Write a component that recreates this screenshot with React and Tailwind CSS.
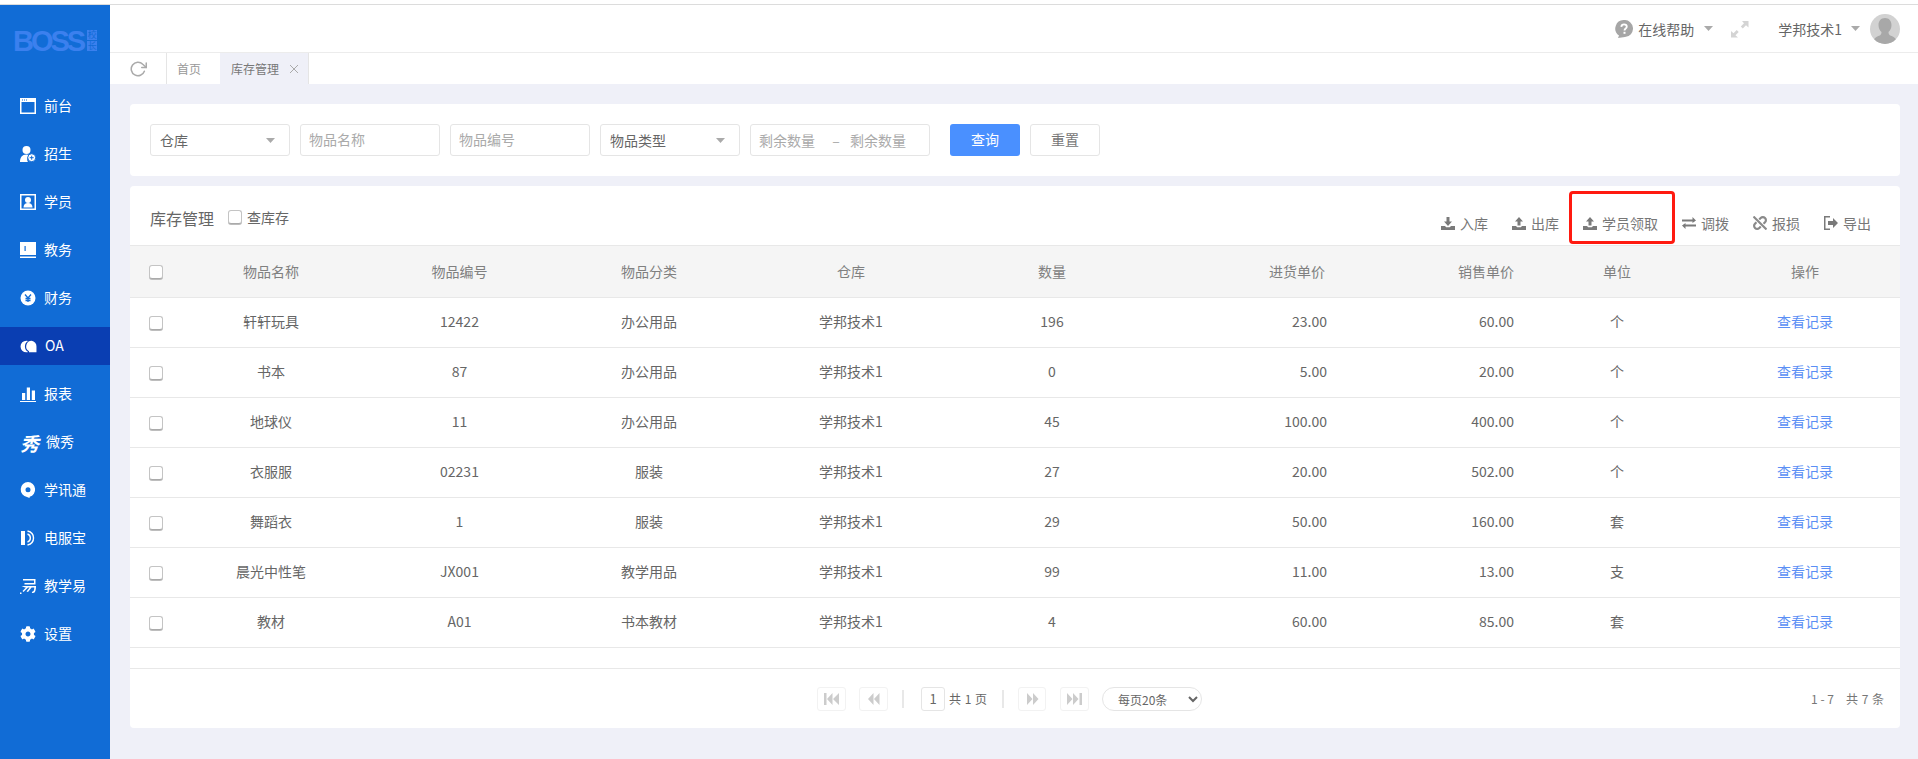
import { FaCog, FaUnlink } from 'react-icons/fa';
import { FiRotateCw } from 'react-icons/fi';

const rows = [
  ['轩轩玩具', '12422', '办公用品', '学邦技术1', '196', '23.00', '60.00', '个'],
  ['书本', '87', '办公用品', '学邦技术1', '0', '5.00', '20.00', '个'],
  ['地球仪', '11', '办公用品', '学邦技术1', '45', '100.00', '400.00', '个'],
  ['衣服服', '02231', '服装', '学邦技术1', '27', '20.00', '502.00', '个'],
  ['舞蹈衣', '1', '服装', '学邦技术1', '29', '50.00', '160.00', '套'],
  ['晨光中性笔', 'JX001', '教学用品', '学邦技术1', '99', '11.00', '13.00', '支'],
  ['教材', 'A01', '书本教材', '学邦技术1', '4', '60.00', '85.00', '套'],
];

const Svg = ({ children, size = 16 }) => (
  <svg width={size} height={size} viewBox="0 0 16 16" fill="white" className="shrink-0">{children}</svg>
);

const navItems = [
  { label: '前台', icon: <Svg><path fillRule="evenodd" d="M0 0h16v16H0zM1.500 4v10.500h13V4z" /><path d="M2 1.500h1v1H2zM4 1.500h1v1H4zM6 1.500h1v1H6z" fill="#116cd6" /></Svg> },
  { label: '招生', icon: <Svg><circle cx="6.500" cy="4" r="4" /><path d="M0 16c0-4.500 2-7.500 6.500-7.500 1 0 2 .2 2.600.5-2 1.500-2.600 4.800-1.200 7z" /><circle cx="11.700" cy="11.700" r="4" fill="white" stroke="#116cd6" strokeWidth="1" /><path d="M9.700 11.700h4M11.700 9.700v4" stroke="#116cd6" strokeWidth="1" /></Svg> },
  { label: '学员', icon: <Svg><path fillRule="evenodd" d="M0 0h16v16H0zM1.500 1.500v13h13v-13z" /><circle cx="8" cy="6" r="3" /><path d="M3.500 13.500c0-3.200 2-4.500 4.500-4.500s4.500 1.300 4.500 4.500z" /></Svg> },
  { label: '教务', icon: <Svg><path d="M0 0h16v13H0zM0 14.500h16V16H0z" /><path d="M4.500 4h1.200v5H4.500z" fill="#116cd6" /></Svg> },
  { label: '财务', icon: <Svg><circle cx="8" cy="8" r="7.500" /><path d="M5 4.500 8 8l3-3.500M8 8v4M5.500 8.500h5M5.500 10.500h5" stroke="#116cd6" strokeWidth="1.300" fill="none" /></Svg> },
  { label: 'OA', active: true, icon: <Svg size={17}><path fillRule="evenodd" d="M6 2.500a5.500 5.500 0 1 0 0 11c.6 0 1.200-.1 1.700-.3A6 6 0 0 1 7.600 2.800 5.500 5.500 0 0 0 6 2.500z" /><path d="M11 2.500a5.300 5.300 0 0 0-2.500 9.900V13.500h7V8A5.300 5.300 0 0 0 11 2.500z" /></Svg> },
  { label: '报表', icon: <Svg><path d="M2 7h3.200v7H2zM6.800 1.500H10V14H6.800zM11.800 4.500H15V14h-3.200zM0 15h16v1H0z" /></Svg> },
  { label: '微秀', glyph: true },
  { label: '学讯通', icon: <Svg><path fillRule="evenodd" d="M8 0a7.500 7.500 0 0 0-1 14.900L9.500 16l.2-1.300A7.500 7.500 0 0 0 8 0zm0 5.300a2.500 2.500 0 1 1 0 5 2.500 2.500 0 0 1 0-5z" /></Svg> },
  { label: '电服宝', icon: <Svg><path d="M1 1h4v14H1z" /><path d="M5 5c1.500.5 1.500 5.500 0 6z" fill="#116cd6" /><path d="M7.500 1c8 1.800 8 12.200 0 14M7.500 4c3.800 1 3.800 7 0 8" fill="none" stroke="white" strokeWidth="1.400" /></Svg> },
  { label: '教学易', icon: <Svg><path d="M3 1h12.500v5.500H4.500V5h9.500V2.500H3zM1.500 8H16c0 3.500-.5 7-3 7h-1.200l.6-1.500c1.200.2 1.800-1.200 1.900-4H5zM0 14.500h1.500V16H0zM2.500 13l4-4h2l-5 5zM6.500 13.500l3.500-4.500h2l-4 5z" /></Svg> },
  { label: '设置', icon: <FaCog className="w-4 h-4 text-white shrink-0" /> },
];

const Tray = ({ up }) => (
  <svg width="14" height="14" viewBox="0 0 14 14" fill="#7a7a7a" className="shrink-0">
    {up ? <path d="M7 1 11 5.500H8.500V9.500h-3V5.500H3z" /> : <path d="M5.500 1h3v4.500H11L7 10 3 5.500h2.500z" />}
    <path d="M0 10h4l1.200 1.300h3.600L10 10h4v4H0z" />
  </svg>
);

const actions = [
  { label: '入库', icon: <Tray /> },
  { label: '出库', icon: <Tray up /> },
  { label: '学员领取', icon: <Tray up />, marked: true },
  { label: '调拨', icon: <svg width="14" height="14" viewBox="0 0 14 14" fill="#7a7a7a" className="shrink-0"><path d="M0 3.500h10.500V1L14 4.500 10.500 7V5.500H0zM14 8.500H3.500V7L0 9.500 3.500 13v-2.500H14z" /></svg> },
  { label: '报损', icon: <FaUnlink className="w-[14px] h-[14px] text-[#8a8a8a] shrink-0" /> },
  { label: '导出', icon: <svg width="14" height="14" viewBox="0 0 14 14" fill="#7a7a7a" className="shrink-0"><path d="M0 0h6v1.500H1.500v11H6V14H0z" /><path d="M4 5h5V2l5 5-5 5V9H4z" /></svg> },
];

const Caret = () => (
  <svg width="9" height="5" viewBox="0 0 9 5" fill="#aaaaaa" className="shrink-0"><path d="M0 0h9L4.500 5z" /></svg>
);

const Check = () => (
  <input type="checkbox" className="appearance-none block w-[14px] h-[14px] rounded-[3px] border border-[#c4c4c4] border-b-[#aaa] bg-white shadow-[0_1px_0_#bdbdbd]" />
);

const FakeSelect = ({ label }) => (
  <div className="w-[140px] h-8 flex items-center justify-between pl-[9px] pr-[14px] border border-[#e5e5e5] rounded-[3px] text-[#666] text-sm">
    <span>{label}</span>
    <Caret />
  </div>
);

const PageBtn = ({ children, w = 'w-[28px]' }) => (
  <button className={`h-6 ${w} flex items-center justify-center border border-[#f2f2f2] rounded-[3px]`}>
    <svg width="15" height="12" viewBox="0 0 15 12" fill="#cccccc">{children}</svg>
  </button>
);

export default function App() {
  return (
    <div className="h-screen overflow-hidden flex flex-col bg-[#eff0f8] text-[#666] font-['Noto_Sans_CJK_SC','Noto_Sans',sans-serif]">
      <div className="h-[5px] shrink-0 bg-white border-b border-[#dcdcdc]" />
      <div className="flex flex-1 min-h-0">
        <aside className="w-[110px] shrink-0 bg-[#116cd6] text-white">
          <div className="h-[77px] flex items-start pl-[13px] pt-[25px] text-[#3b80ee]">
            <span className="font-['Liberation_Sans',sans-serif] font-bold text-[29px] leading-[22px] tracking-[-3px]">BOSS</span>
            <div className="ml-1 flex flex-col gap-px">
              <span className="w-[10px] h-[10px] bg-[#3b80ee] text-[#116cd6] text-[9px] leading-[10px] text-center">校</span>
              <span className="w-[10px] h-[10px] bg-[#3b80ee] text-[#116cd6] text-[9px] leading-[10px] text-center">长</span>
            </div>
          </div>
          <nav className="pt-[5px]">
            {navItems.map(item => (
              <div key={item.label} className={`h-[38px] mb-[10px] flex items-center pl-5 gap-2 text-sm ${item.active ? 'bg-[#0a3eb2]' : ''}`}>
                {item.glyph
                  ? <span className="w-[17px] text-[19px] italic font-bold leading-none text-white">秀</span>
                  : item.icon}
                <span className={`pb-[2px] ${item.glyph ? 'ml-px' : ''}`}>{item.label}</span>
              </div>
            ))}
          </nav>
        </aside>

        <main className="flex-1 min-w-0 flex flex-col">
          <header className="h-12 shrink-0 bg-white border-b border-[#ececec] flex items-center justify-end pr-[18px] text-sm">
            <svg width="18" height="18" viewBox="0 0 18 18" className="shrink-0">
              <path d="M9 0a8.500 8.500 0 0 1 1 17l-7 1 1-2.500A8.500 8.500 0 0 1 9 0z" fill="#a6a6a6" />
              <path d="M6.300 6.800C6.500 5 7.700 4.300 9 4.300c1.600 0 2.800 1 2.800 2.400 0 1.800-2.300 1.900-2.300 3.700" fill="none" stroke="white" strokeWidth="1.800" />
              <rect x="8.500" y="11.800" width="2" height="2" fill="white" />
            </svg>
            <span className="ml-[5px]">在线帮助</span>
            <span className="ml-[10px]"><Caret /></span>
            <svg width="18" height="18" viewBox="0 0 18 18" fill="#d4d4d4" className="ml-[18px]">
              <path d="M11 1h6.500v6.500L15 5.200 11.800 8.500 9.800 6.500 13 3.200zM0 17.500V11l2.500 2.300 3.200-3.300 2 2-3.200 3.300L7 17.500z" />
            </svg>
            <span className="ml-[29px]">学邦技术1</span>
            <span className="ml-[9px]"><Caret /></span>
            <div className="ml-[10px] w-[30px] h-[30px] rounded-full bg-[#d2d2d2] overflow-hidden">
              <svg width="30" height="30" viewBox="0 0 30 30" fill="#a8a8a8">
                <path d="M15 4c4 0 6.500 2.800 6.500 7 0 3-1.200 5.500-3 7 0 2 .5 3 2.500 3.800 2.500 1 4.500 2 5 4.200H4c.5-2.200 2.500-3.200 5-4.200 2-.8 2.500-1.800 2.500-3.800-1.800-1.500-3-4-3-7 0-4.200 2.500-7 6.500-7zM3 26h24v4H3z" />
              </svg>
            </div>
          </header>

          <div className="h-[31px] shrink-0 bg-white flex text-xs">
            <div className="w-[57px] flex items-center justify-center border-r border-[#e5e5e5] text-[#aaa]">
              <FiRotateCw className="w-[18px] h-[18px]" />
            </div>
            <div className="w-[53px] flex items-center pl-[10px] text-[#999]">首页</div>
            <div className="w-[89px] flex items-center pl-[11px] gap-[11px] bg-[#eff0f8] border-r border-[#e5e5e5] text-[#777]">
              <span>库存管理</span>
              <svg width="8" height="8" viewBox="0 0 8 8" stroke="#aaaaaa" strokeWidth="1" className="shrink-0"><path d="M0 0l8 8M8 0 0 8" /></svg>
            </div>
          </div>

          <div className="flex-1 min-h-0 pt-5 pl-5 pr-[18px]">
            <section className="h-[72px] bg-white rounded flex items-center gap-[10px] px-5">
              <FakeSelect label="仓库" />
              <input placeholder="物品名称" className="w-[140px] h-8 px-[8px] pb-[2px] border border-[#e5e5e5] rounded-[3px] text-sm placeholder:text-[#aaa]" />
              <input placeholder="物品编号" className="w-[140px] h-8 px-[8px] pb-[2px] border border-[#e5e5e5] rounded-[3px] text-sm placeholder:text-[#aaa]" />
              <FakeSelect label="物品类型" />
              <div className="w-[180px] h-8 shrink-0 flex items-center pl-2 border border-[#e5e5e5] rounded-[3px] text-sm text-[#aaa] whitespace-nowrap">
                <span className="w-[56px]">剩余数量</span>
                <span className="w-[35px] pl-[7px] text-center">–</span>
                <span className="w-[56px]">剩余数量</span>
              </div>
              <button className="ml-[10px] w-[70px] h-8 pb-[2px] bg-[#4a90ff] rounded-[3px] text-white text-sm">查询</button>
              <button className="w-[70px] h-8 pb-[2px] border border-[#e5e5e5] rounded-[3px] text-sm text-[#777]">重置</button>
            </section>

            <section className="mt-[10px] h-[542px] bg-white rounded overflow-hidden">
              <div className="h-[59px] flex pl-5 pr-[29px]">
                <span className="mt-[20px] text-base leading-6 text-[#666]">库存管理</span>
                <label className="mt-[24px] ml-[14px] h-[14px] flex items-center gap-[5px] text-sm">
                  <Check />
                  <span>查库存</span>
                </label>
                <div className="ml-auto mt-[27px] h-5 flex items-center gap-6 text-sm text-[#777]">
                  {actions.map(a => (
                    <div key={a.label} className="relative flex items-center gap-[5px]">
                      {a.icon}
                      <span>{a.label}</span>
                      {a.marked && <div className="absolute -left-[14px] -right-[17px] -top-[22px] -bottom-[11px] border-[3px] border-[#ff1a10] rounded-[4px]" />}
                    </div>
                  ))}
                </div>
              </div>

              <table className="table-fixed w-full text-sm border-collapse">
                <colgroup>
                  <col className="w-[46px]" />
                  <col className="w-[190px]" />
                  <col className="w-[187px]" />
                  <col className="w-[192px]" />
                  <col className="w-[212px]" />
                  <col className="w-[190px]" />
                  <col className="w-[190px]" />
                  <col className="w-[187px]" />
                  <col className="w-[186px]" />
                  <col className="w-[190px]" />
                </colgroup>
                <thead>
                  <tr className="h-[52px] bg-[#f5f5f5] border-y border-[#e8e8e8] text-[#808080]">
                    <th className="font-normal pl-[19px]"><Check /></th>
                    {['物品名称', '物品编号', '物品分类', '仓库', '数量'].map(h => <th key={h} className="font-normal text-center pb-[2px]">{h}</th>)}
                    <th className="font-normal text-right pr-3 pb-[2px]">进货单价</th>
                    <th className="font-normal text-right pr-[10px] pb-[2px]">销售单价</th>
                    <th className="font-normal text-center pb-[2px]">单位</th>
                    <th className="font-normal text-center pb-[2px]">操作</th>
                  </tr>
                </thead>
                <tbody>
                  {rows.map(r => (
                    <tr key={r[0]} className="h-[50px] border-b border-[#e8e8e8]">
                      <td className="pl-[19px]"><Check /></td>
                      {r.slice(0, 5).map((v, i) => <td key={i} className="text-center pb-1">{v}</td>)}
                      <td className="text-right pr-[10px] pb-1">{r[5]}</td>
                      <td className="text-right pr-[10px] pb-1">{r[6]}</td>
                      <td className="text-center pb-1">{r[7]}</td>
                      <td className="text-center text-[#5b8ff5] pb-1">查看记录</td>
                    </tr>
                  ))}
                  <tr className="h-[21px] border-b border-[#e8e8e8]"><td colSpan={10} /></tr>
                </tbody>
              </table>

              <div className="h-[60px] flex items-center pl-[687px] pr-4 text-xs">
                <PageBtn w="w-[29px]"><path d="M0 0h2.500v12H0zM8.500 0v12L3 6zM15 0v12L9 6z" /></PageBtn>
                <div className="ml-[13px]"><PageBtn w="w-[29px]"><path d="M7.500 0v12L2 6zM13.500 0v12L8 6z" /></PageBtn></div>
                <span className="ml-[14px] w-[2px] h-[18px] bg-[#e8e8e8]" />
                <span className="ml-[17px] w-6 h-6 border border-[#e5e5e5] rounded-[3px] flex items-center justify-center text-[13px]">1</span>
                <span className="ml-[4px] w-[37px] whitespace-nowrap [word-spacing:1px]">共 1 页</span>
                <span className="ml-[16px] w-[2px] h-[18px] bg-[#e8e8e8]" />
                <div className="ml-[14px]"><PageBtn><path d="M2 0v12l5.500-6zM8 0v12l5.500-6z" /></PageBtn></div>
                <div className="ml-[14px]"><PageBtn w="w-[29px]"><path d="M0 0v12l5.500-6zM6 0v12l5.500-6zM12.500 0H15v12h-2.500z" /></PageBtn></div>
                <select className="ml-[13px] w-[100px] h-6 pl-[11px] border border-[#e5e5e5] rounded-full text-xs bg-white">
                  <option>每页20条</option>
                </select>
                <span className="ml-auto flex gap-3 whitespace-nowrap text-[#777]">
                  <span>1 - 7</span>
                  <span className="[word-spacing:1px]">共 7 条</span>
                </span>
              </div>
            </section>
          </div>
        </main>
      </div>
    </div>
  );
}
